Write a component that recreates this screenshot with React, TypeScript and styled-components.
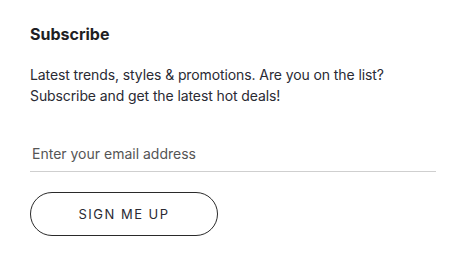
import React from "react";
import styled, { createGlobalStyle } from "styled-components";

const Global = createGlobalStyle`
  html, body { margin: 0; padding: 0; background: #fff; }
  body { font-family: Inter, "Noto Sans", sans-serif; color: #222; }
`;

const Section = styled.section`
  display: flex;
  flex-direction: column;
  padding: 24px 21px 0 30px;
  width: 457px;
  box-sizing: border-box;
`;

const Title = styled.h3`
  margin: 0;
  font-size: 16px;
  font-weight: 700;
  line-height: 20px;
  color: #1f1f24;
`;

const Text = styled.p`
  margin: 20px 0 0;
  font-size: 14px;
  line-height: 21px;
  letter-spacing: -0.1px;
  color: #2a2a33;
`;

const Form = styled.form`
  display: flex;
  flex-direction: column;
  align-items: flex-start;
  margin-top: 30px;
`;

const Input = styled.input`
  width: 100%;
  box-sizing: border-box;
  height: 36px;
  border: none;
  border-bottom: 1px solid #cfcfcf;
  padding: 0 0 0 2px;
  font-family: inherit;
  font-size: 14px;
  color: #333;
  outline: none;
  &::placeholder { color: #555; }
`;

const Button = styled.button`
  margin-top: 20px;
  width: 188px;
  height: 44px;
  border: 1px solid #2a2a2a;
  border-radius: 22px;
  background: #fff;
  font-family: inherit;
  font-size: 13px;
  letter-spacing: 1.5px;
  color: #2a2a33;
  cursor: pointer;
`;

export default function App() {
  return (
    <>
      <Global />
      <Section>
        <Title>Subscribe</Title>
        <Text>
          Latest trends, styles &amp; promotions. Are you on the list?
          <br />
          Subscribe and get the latest hot deals!
        </Text>
        <Form onSubmit={(e) => e.preventDefault()}>
          <Input type="email" placeholder="Enter your email address" />
          <Button type="submit">SIGN ME UP</Button>
        </Form>
      </Section>
    </>
  );
}
